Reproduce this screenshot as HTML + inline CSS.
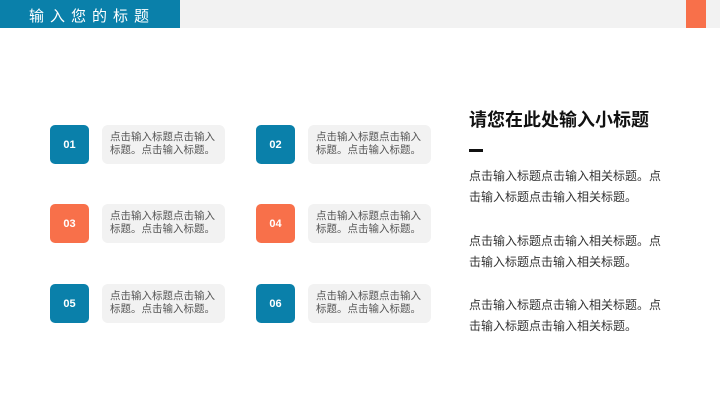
<!DOCTYPE html>
<html><head><meta charset="utf-8"><style>
*{margin:0;padding:0;box-sizing:border-box}
body{width:720px;height:405px;background:#fff;position:relative;overflow:hidden;font-family:"Liberation Sans","Noto Sans CJK SC",sans-serif}
.a{position:absolute}
.sq{position:absolute;width:39px;height:39px;border-radius:5px;color:#fff;font-weight:bold;font-size:11px;display:flex;align-items:center;justify-content:center}
.b{background:#0a80aa}.o{background:#f8704a}
.tx{position:absolute;width:123px;height:39px;border-radius:6px;background:#f2f2f2;color:#555;font-size:10.5px;line-height:13px;padding:6px 0 0 8px}
.tx span{display:block;width:108px}
.p{position:absolute;left:469px;font-size:12px;line-height:21px;color:#333;width:196px}
</style></head><body>
<div class="a" style="left:0;top:0;width:180px;height:28px;background:#0a80aa;color:#fff;font-size:15px;letter-spacing:6px;padding:5px 0 0 29px">输入您的标题</div>
<div class="a" style="left:180px;top:0;width:540px;height:28px;background:#f2f2f2"></div>
<div class="a" style="left:686px;top:0;width:20px;height:28px;background:#f8704a"></div>
<div class="sq b" style="left:50px;top:125px">01</div><div class="tx" style="left:102px;top:125px"><span>点击输入标题点击输入标题。点击输入标题。</span></div>
<div class="sq b" style="left:256px;top:125px">02</div><div class="tx" style="left:308px;top:125px"><span>点击输入标题点击输入标题。点击输入标题。</span></div>
<div class="sq o" style="left:50px;top:204px">03</div><div class="tx" style="left:102px;top:204px"><span>点击输入标题点击输入标题。点击输入标题。</span></div>
<div class="sq o" style="left:256px;top:204px">04</div><div class="tx" style="left:308px;top:204px"><span>点击输入标题点击输入标题。点击输入标题。</span></div>
<div class="sq b" style="left:50px;top:284px">05</div><div class="tx" style="left:102px;top:284px"><span>点击输入标题点击输入标题。点击输入标题。</span></div>
<div class="sq b" style="left:256px;top:284px">06</div><div class="tx" style="left:308px;top:284px"><span>点击输入标题点击输入标题。点击输入标题。</span></div>
<div class="a" style="left:469px;top:106px;font-size:18px;font-weight:bold;color:#111">请您在此处输入小标题</div>
<div class="a" style="left:469px;top:149px;width:14px;height:3px;background:#111"></div>
<div class="p" style="top:166px">点击输入标题点击输入相关标题。点击输入标题点击输入相关标题。</div>
<div class="p" style="top:231px">点击输入标题点击输入相关标题。点击输入标题点击输入相关标题。</div>
<div class="p" style="top:295px">点击输入标题点击输入相关标题。点击输入标题点击输入相关标题。</div>
</body></html>
